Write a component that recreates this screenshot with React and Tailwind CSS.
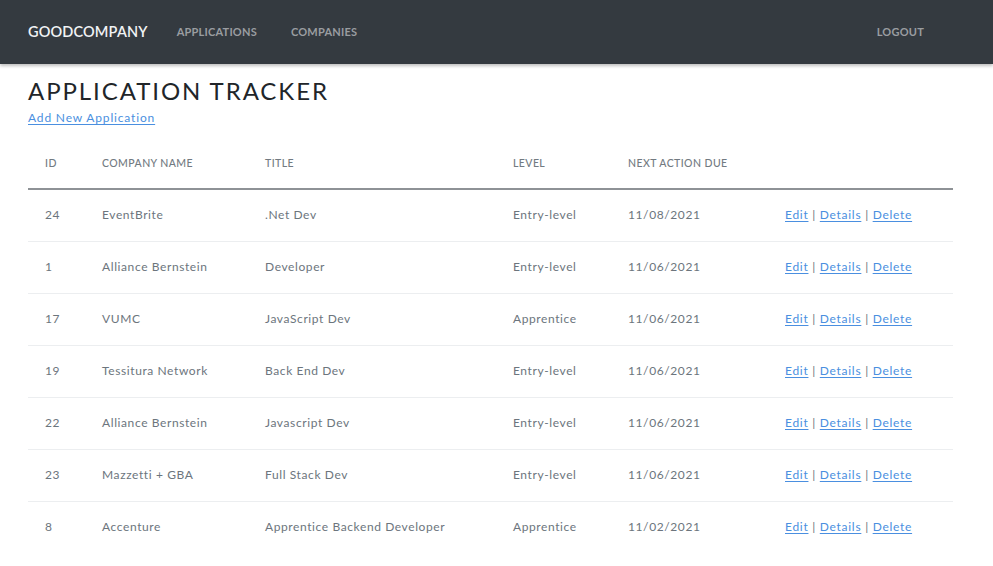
import React from 'react'

const rows = [
  { id: 24, company: 'EventBrite', title: '.Net Dev', level: 'Entry-level', due: '11/08/2021' },
  { id: 1, company: 'Alliance Bernstein', title: 'Developer', level: 'Entry-level', due: '11/06/2021' },
  { id: 17, company: 'VUMC', title: 'JavaScript Dev', level: 'Apprentice', due: '11/06/2021' },
  { id: 19, company: 'Tessitura Network', title: 'Back End Dev', level: 'Entry-level', due: '11/06/2021' },
  { id: 22, company: 'Alliance Bernstein', title: 'Javascript Dev', level: 'Entry-level', due: '11/06/2021' },
  { id: 23, company: 'Mazzetti + GBA', title: 'Full Stack Dev', level: 'Entry-level', due: '11/06/2021' },
  { id: 8, company: 'Accenture', title: 'Apprentice Backend Developer', level: 'Apprentice', due: '11/02/2021' },
]

const link = 'text-[#4a8fe0] underline underline-offset-2'

export default function App() {
  return (
    <div className="min-h-[566px] bg-white font-['Lato','Noto_Sans',sans-serif]">
      {/* Navbar */}
      <nav className="h-16 bg-[#343a40] flex items-center px-7 shadow-[0_2px_3px_rgba(0,0,0,0.25)]">
        <span className="text-[14.5px] font-semibold tracking-[0.01em] text-[#f1f3f5]">GOODCOMPANY</span>
        <a className="ml-[29px] text-[11px] font-bold tracking-[0.02em] text-[#9a9da1]">APPLICATIONS</a>
        <a className="ml-[34px] text-[11px] font-bold tracking-[0.02em] text-[#9a9da1]">COMPANIES</a>
        <a className="ml-auto mr-[41px] text-[11px] font-bold tracking-[0.02em] text-[#9a9da1]">LOGOUT</a>
      </nav>

      <div className="px-7">
        <h1 className="mt-[13px] text-[24px] leading-[28px] tracking-[0.08em] text-[#212529] font-normal">APPLICATION TRACKER</h1>
        <a className={`block mt-[5px] text-[12px] leading-[16px] tracking-[0.07em] ${link}`}>Add New Application</a>

        <table className="mt-[13px] w-[925px] border-collapse text-left">
          <thead>
            <tr className="h-[50px] border-b-2 border-[#8e9296] text-[10.5px] tracking-[0.04em] text-[#727a81]">
              <th className="w-[57px] pl-[17px] font-medium">ID</th>
              <th className="w-[163px] pl-[17px] font-medium">COMPANY NAME</th>
              <th className="w-[248px] pl-[17px] font-medium">TITLE</th>
              <th className="w-[115px] pl-[17px] font-medium">LEVEL</th>
              <th className="w-[157px] pl-[17px] font-medium">NEXT ACTION DUE</th>
              <th></th>
            </tr>
          </thead>
          <tbody>
            {rows.map((r, i) => (
              <tr key={r.id} className={`h-[52px] text-[12px] tracking-[0.05em] text-[#6c757d] ${i < rows.length - 1 ? 'border-b border-[#eceef0]' : ''}`}>
                <td className="pl-[17px]">{r.id}</td>
                <td className="pl-[17px]">{r.company}</td>
                <td className="pl-[17px]">{r.title}</td>
                <td className="pl-[17px]">{r.level}</td>
                <td className="pl-[17px]">{r.due}</td>
                <td className="pl-[17px] tracking-[0.06em] text-[#6c757d]">
                  <a className={link}>Edit</a> | <a className={link}>Details</a> | <a className={link}>Delete</a>
                </td>
              </tr>
            ))}
          </tbody>
        </table>
      </div>
    </div>
  )
}
